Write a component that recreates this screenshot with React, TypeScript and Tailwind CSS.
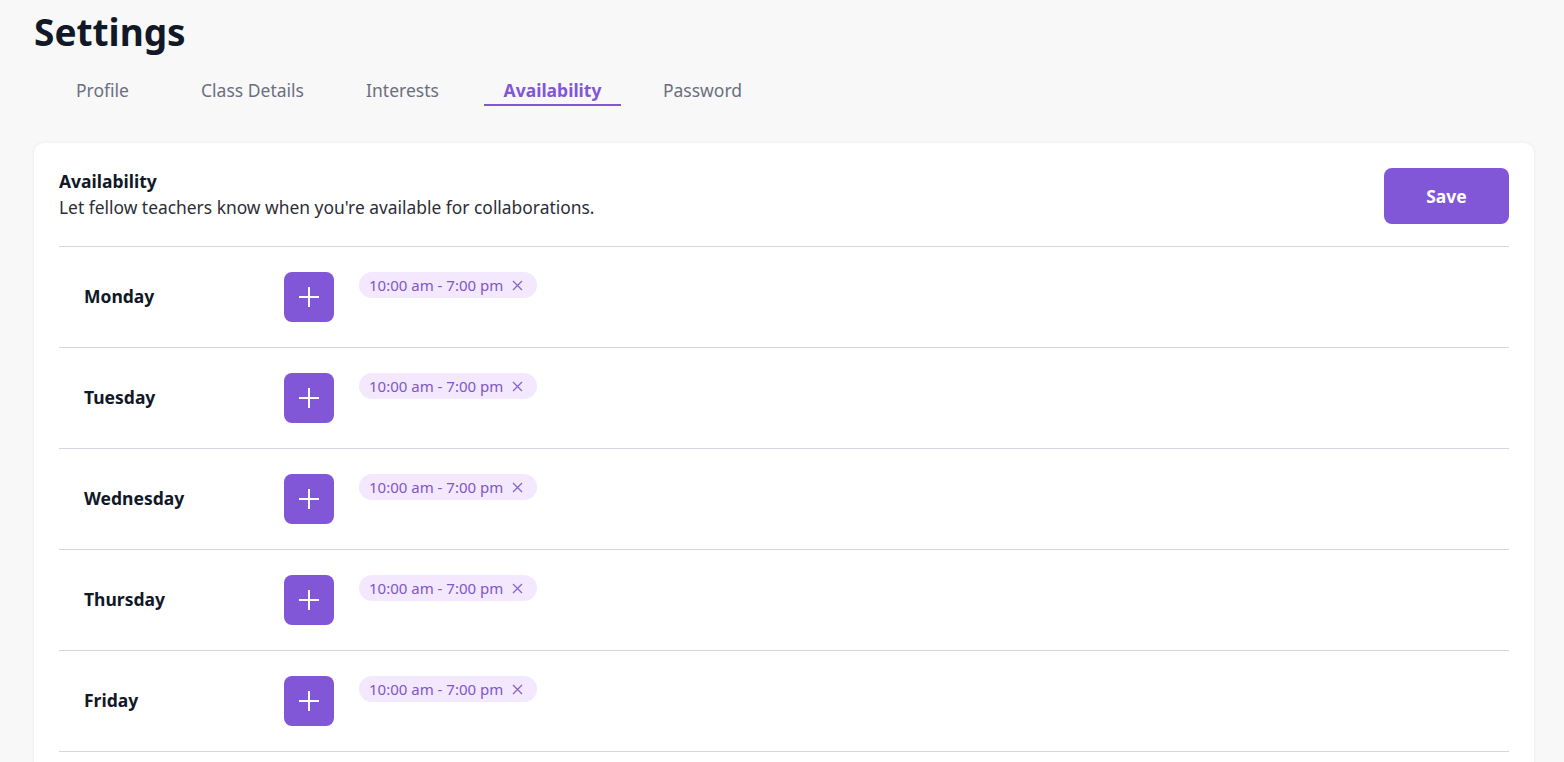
import React, { useState } from "react";

const tabs = ["Profile", "Class Details", "Interests", "Availability", "Password"];
const days = ["Monday", "Tuesday", "Wednesday", "Thursday", "Friday"];

const PlusIcon = () => (
  <svg width="22" height="22" viewBox="0 0 22 22" fill="none">
    <path d="M11 1v20M1 11h20" stroke="white" strokeWidth="2" />
  </svg>
);

const XIcon = () => (
  <svg width="11" height="11" viewBox="0 0 11 11" fill="none">
    <path d="M1 1l9 9M10 1l-9 9" stroke="#8a63d2" strokeWidth="1.3" />
  </svg>
);

const DayRow = ({ day }: { day: string }) => (
  <div className="flex items-start border-b border-[#d8d5e0] py-[25px]">
    <div className="w-[225px] pl-[25px] h-[50px] pb-[1px] flex items-center text-[17.5px] font-bold text-[#111827]">
      {day}
    </div>
    <button className="w-[50px] h-[50px] rounded-lg bg-[#8157d8] flex items-center justify-center">
      <PlusIcon />
    </button>
    <div className="ml-[25px] h-[26px] rounded-full bg-[#f3e8fd] pl-[10px] pr-[14px] flex items-center gap-[9px] text-[15px] text-[#7e57c8]">
      <span>10:00 am - 7:00 pm</span>
      <XIcon />
    </div>
  </div>
);

const App = () => {
  const [active, setActive] = useState("Availability");

  return (
    <div
      className="min-h-screen bg-[#f8f8f8] px-[34px] pt-[8px] pb-[30px]"
      style={{ fontFamily: '"Noto Sans", "Open Sans", sans-serif' }}
    >
      <h1 className="text-[37px] font-bold text-[#111827] leading-[48px]">Settings</h1>
      <div className="flex gap-[13px] mt-[20px]">
        {tabs.map((t) => (
          <button
            key={t}
            onClick={() => setActive(t)}
            className={
              t === active
                ? "w-[137px] h-[30px] pt-[1px] text-[17.5px] font-bold text-[#8157d8] border-b-2 border-[#8157d8]"
                : "w-[137px] h-[30px] pt-[1px] text-[17.5px] text-[#6b6f80] border-b-2 border-transparent"
            }
          >
            {t}
          </button>
        ))}
      </div>
      <div className="mt-[37px] w-[1500px] bg-white rounded-[10px] shadow-[0_0_4px_rgba(0,0,0,0.06)] px-[25px] pt-[25px] pb-[40px]">
        <div className="flex justify-between items-start border-b border-[#d8d5e0] pb-[22px]">
          <div>
            <h2 className="text-[17.5px] font-bold text-[#111827] leading-[26px]">Availability</h2>
            <p className="text-[17.4px] text-[#2d2d36] leading-[26px]">
              Let fellow teachers know when you're available for collaborations.
            </p>
          </div>
          <button className="w-[125px] h-[56px] rounded-lg bg-[#8157d8] text-white text-[17.5px] font-bold">
            Save
          </button>
        </div>
        {days.map((d) => (
          <DayRow key={d} day={d} />
        ))}
      </div>
    </div>
  );
};

export default App;
